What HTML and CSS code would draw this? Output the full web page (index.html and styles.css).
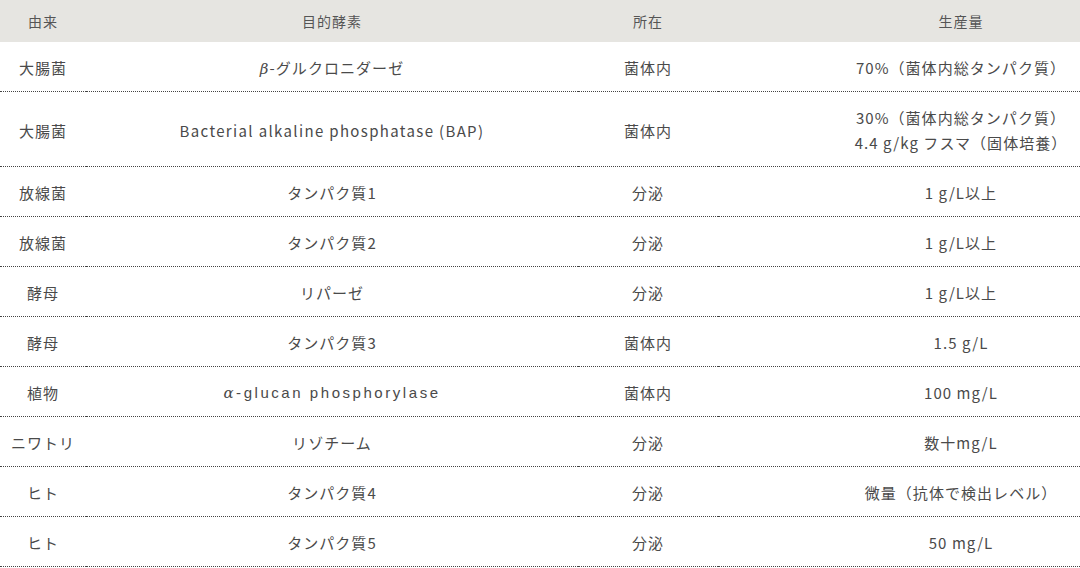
FILE: index.html
```html
<!DOCTYPE html>
<html lang="ja">
<head>
<meta charset="utf-8">
<link rel="stylesheet" href="styles.css">
</head>
<body>
<table class="enzymes">
  <colgroup>
    <col class="c-origin">
    <col class="c-enzyme">
    <col class="c-place">
    <col class="c-amount">
  </colgroup>
  <thead>
    <tr><th>由来</th><th>目的酵素</th><th>所在</th><th class="amount">生産量</th></tr>
  </thead>
  <tbody>
    <tr><td>大腸菌</td><td><i class="greek">β</i>-グルクロニダーゼ</td><td>菌体内</td><td class="amount">70%（菌体内総タンパク質）</td></tr>
    <tr><td>大腸菌</td><td class="bap">Bacterial alkaline phosphatase (BAP)</td><td>菌体内</td><td class="amount">30%（菌体内総タンパク質）<br>4.4 g/kg フスマ（固体培養）</td></tr>
    <tr><td>放線菌</td><td>タンパク質1</td><td>分泌</td><td class="amount">1 g/L以上</td></tr>
    <tr><td>放線菌</td><td>タンパク質2</td><td>分泌</td><td class="amount">1 g/L以上</td></tr>
    <tr><td>酵母</td><td>リパーゼ</td><td>分泌</td><td class="amount">1 g/L以上</td></tr>
    <tr><td>酵母</td><td>タンパク質3</td><td>菌体内</td><td class="amount">1.5 g/L</td></tr>
    <tr><td>植物</td><td class="latin"><i class="greek">α</i>-glucan phosphorylase</td><td>菌体内</td><td class="amount">100 mg/L</td></tr>
    <tr><td>ニワトリ</td><td>リゾチーム</td><td>分泌</td><td class="amount">数十mg/L</td></tr>
    <tr><td>ヒト</td><td>タンパク質4</td><td>分泌</td><td class="amount">微量（抗体で検出レベル）</td></tr>
    <tr><td>ヒト</td><td>タンパク質5</td><td>分泌</td><td class="amount">50 mg/L</td></tr>
  </tbody>
</table>
</body>
</html>
```

FILE: styles.css
```css
html, body {
  margin: 0;
  padding: 0;
  background: #ffffff;
}

body {
  font-family: "Noto Sans CJK JP", "Noto Sans", sans-serif;
  font-size: 15px;
  color: #4a4a4a;
  letter-spacing: 0.07em;
}

.enzymes {
  width: 1080px;
  border-collapse: separate;
  border-spacing: 0;
  table-layout: fixed;
}

.c-origin { width: 86px; }
.c-enzyme { width: 492px; }
.c-place { width: 140px; }
.c-amount { width: 362px; }

.enzymes th {
  background: #e6e5e1;
  font-weight: normal;
  font-size: 14px;
  line-height: 20px;
  color: #555555;
  height: 42px;
  padding: 0;
  text-align: center;
  vertical-align: middle;
}

.enzymes td {
  padding: 13px 0 11px;
  line-height: 25px;
  text-align: center;
  vertical-align: middle;
  border-bottom: 1px dotted #444444;
}

.enzymes .amount {
  padding-left: 124px;
}

.bap {
  letter-spacing: 0.09em;
}

.greek {
  font-family: "DejaVu Serif", serif;
  font-style: italic;
  line-height: 1;
}

.latin {
  font-family: "Liberation Sans", sans-serif;
  letter-spacing: 0.17em;
}
```
